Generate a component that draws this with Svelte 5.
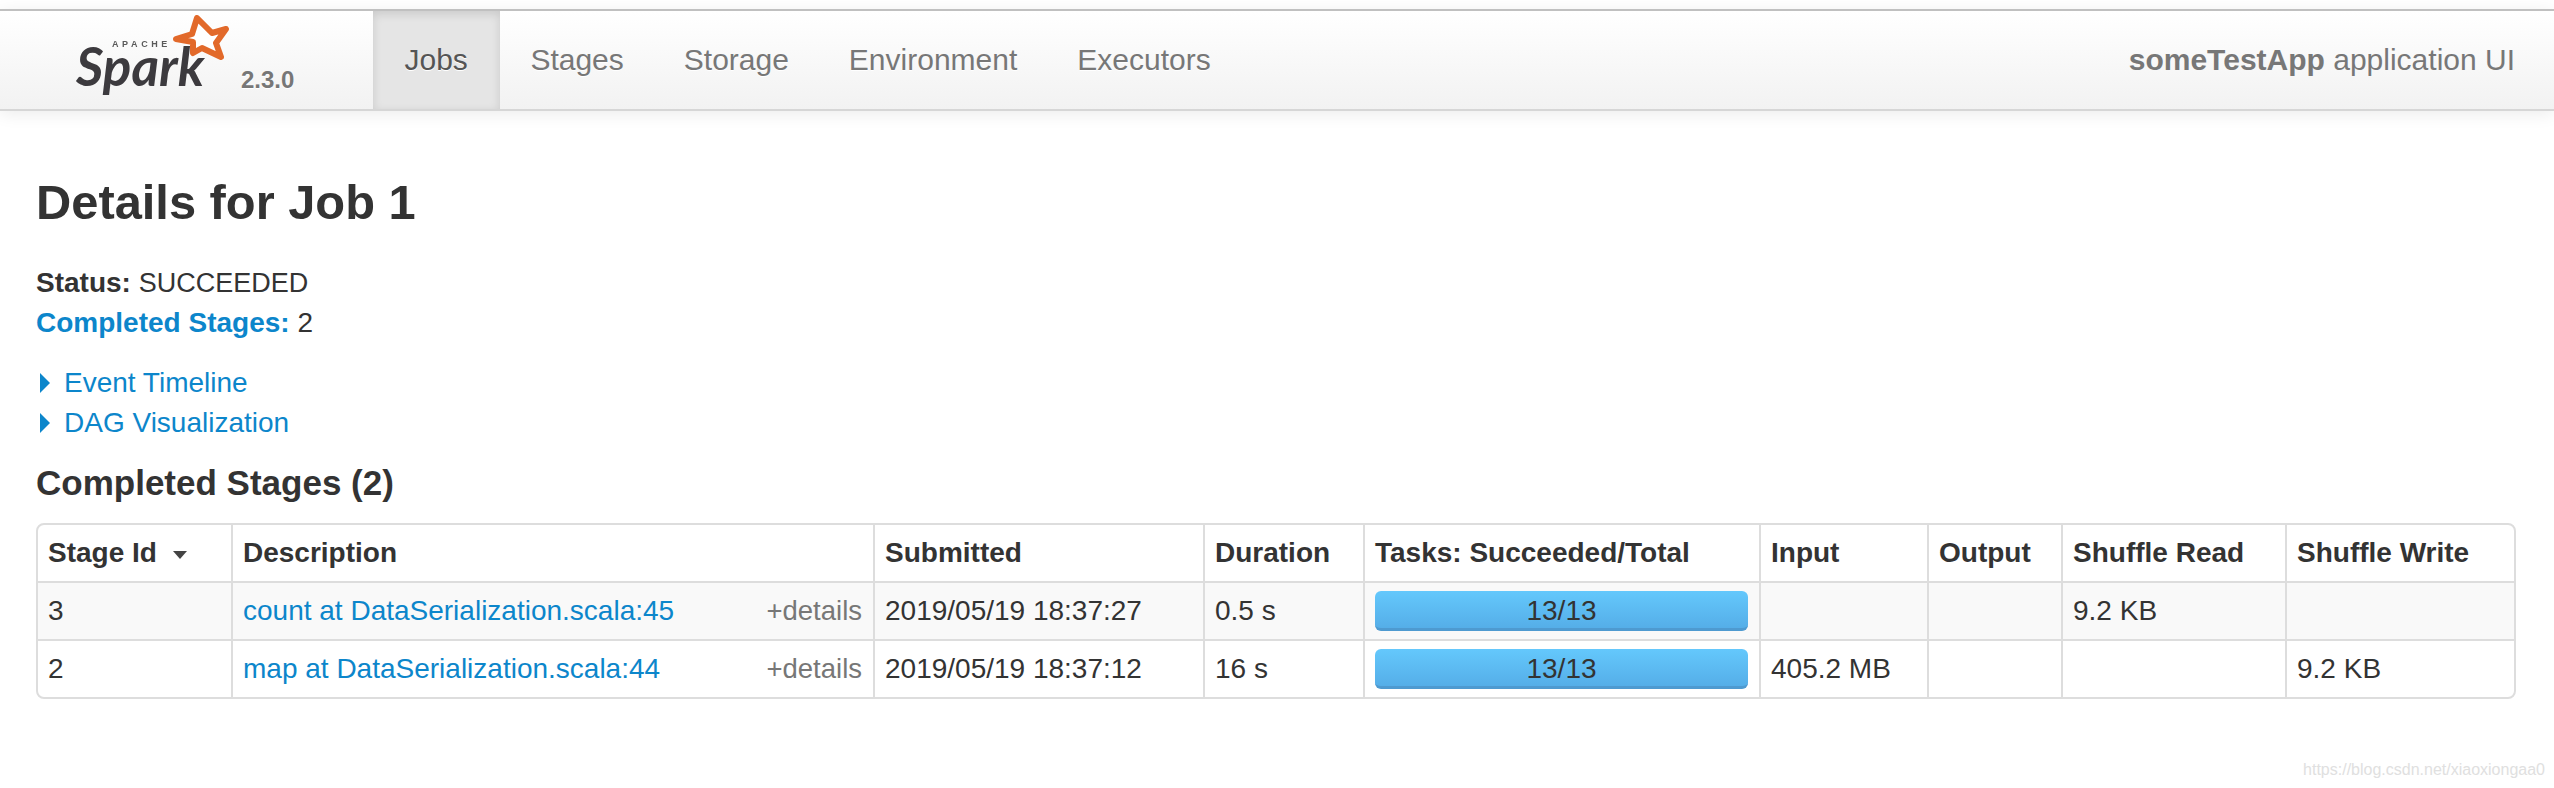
<script>
	const tabs = ['Jobs', 'Stages', 'Storage', 'Environment', 'Executors'];

	const columns = [
		{ label: 'Stage Id', width: 193, sorted: true },
		{ label: 'Description', width: 642 },
		{ label: 'Submitted', width: 330 },
		{ label: 'Duration', width: 160 },
		{ label: 'Tasks: Succeeded/Total', width: 396 },
		{ label: 'Input', width: 168 },
		{ label: 'Output', width: 134 },
		{ label: 'Shuffle Read', width: 224 },
		{ label: 'Shuffle Write', width: 229 }
	];

	const stages = [
		{ id: 3, desc: 'count at DataSerialization.scala:45', submitted: '2019/05/19 18:37:27', duration: '0.5 s', tasks: '13/13', input: '', output: '', read: '9.2 KB', write: '' },
		{ id: 2, desc: 'map at DataSerialization.scala:44', submitted: '2019/05/19 18:37:12', duration: '16 s', tasks: '13/13', input: '405.2 MB', output: '', read: '', write: '9.2 KB' }
	];
</script>

<div class="page">
	<header class="navbar">
		<div class="brand">
			<div class="logo">
				<svg class="star" width="70" height="60" viewBox="0 0 70 60">
					<polygon points="27,7 42,22 56,18 46,32 51,46 32,37 23,42 23,31 6,28 22,23" />
				</svg>
				<span class="apache">APACHE</span>
				<span class="spark">Spark</span>
			</div>
			<span class="version">2.3.0</span>
		</div>
		<nav class="tabs">
			{#each tabs as tab, i}
				<span class="tab" class:active={i === 0}>{tab}</span>
			{/each}
		</nav>
		<p class="app-name"><strong>someTestApp</strong> application UI</p>
	</header>

	<main class="content">
		<h3>Details for Job 1</h3>

		<ul class="summary">
			<li><strong>Status:</strong> <span class="status">SUCCEEDED</span></li>
			<li><strong class="link">Completed Stages:</strong> 2</li>
		</ul>

		<div class="toggles">
			<div class="toggle"><span class="arrow"></span>Event Timeline</div>
			<div class="toggle"><span class="arrow"></span>DAG Visualization</div>
		</div>

		<h4>Completed Stages (2)</h4>

		<table>
			<colgroup>
				{#each columns as col}
					<col style="width: {col.width}px" />
				{/each}
			</colgroup>
			<thead>
				<tr>
					{#each columns as col}
						<th>{col.label}{#if col.sorted}<span class="sort"></span>{/if}</th>
					{/each}
				</tr>
			</thead>
			<tbody>
				{#each stages as s}
					<tr>
						<td>{s.id}</td>
						<td>
							<div class="desc">
								<span class="link">{s.desc}</span>
								<span class="more">+details</span>
							</div>
						</td>
						<td>{s.submitted}</td>
						<td>{s.duration}</td>
						<td class="bar-cell"><div class="bar">{s.tasks}</div></td>
						<td>{s.input}</td>
						<td>{s.output}</td>
						<td>{s.read}</td>
						<td>{s.write}</td>
					</tr>
				{/each}
			</tbody>
		</table>
	</main>

	<span class="watermark">https://blog.csdn.net/xiaoxiongaa0</span>
</div>

<style>
	:global(body) {
		margin: 0;
		background: #fff;
	}

	.page {
		position: relative;
		height: 788px;
		overflow: hidden;
		padding-top: 9px;
		box-sizing: border-box;
		font-family: "Liberation Sans", Arial, sans-serif;
		font-size: 28px;
		color: #333;
	}

	.navbar {
		display: flex;
		align-items: stretch;
		height: 102px;
		box-sizing: border-box;
		border-top: 2px solid #c0c0c0;
		border-bottom: 2px solid #d6d6d6;
		background: linear-gradient(#fff, #f2f2f2);
		box-shadow: 0 3px 16px rgba(0, 0, 0, 0.08);
	}

	.brand {
		width: 373px;
		flex-shrink: 0;
		position: relative;
	}

	.logo {
		position: absolute;
		left: 70px;
		top: 0;
		width: 170px;
		height: 98px;
		filter: blur(0.5px);
	}

	.star {
		position: absolute;
		left: 100px;
		top: 0;
	}

	.star polygon {
		fill: #fff;
		stroke: #e2692a;
		stroke-width: 6;
		stroke-linejoin: round;
	}

	.apache {
		position: absolute;
		left: 42px;
		top: 28px;
		font-size: 9px;
		font-weight: 700;
		letter-spacing: 3.6px;
		color: #5a5a5a;
	}

	.spark {
		position: absolute;
		left: 6px;
		top: 24px;
		font-family: Lato, sans-serif;
		font-style: italic;
		font-weight: 700;
		font-size: 53px;
		line-height: 62px;
		color: #3c3a3e;
	}

	.version {
		position: absolute;
		left: 241px;
		top: 55px;
		font-size: 24px;
		font-weight: 700;
		color: #777;
		text-shadow: 0 1px 0 #fff;
	}

	.tabs {
		display: flex;
	}

	.tab {
		display: flex;
		align-items: center;
		padding: 0 30px;
		font-size: 30px;
		color: #777;
		text-shadow: 0 1px 0 #fff;
	}

	.tab.active {
		padding: 0 32.5px 0 31.5px;
		color: #555;
		background: #e5e5e5;
		box-shadow: inset 0 3px 10px rgba(0, 0, 0, 0.12);
	}

	.app-name {
		margin: 0 39px 0 auto;
		align-self: center;
		font-size: 30px;
		color: #777;
	}

	.content {
		padding: 63px 38px 0 36px;
	}

	h3 {
		margin: 0;
		font-size: 48.8px;
		line-height: 56px;
		color: #333;
	}

	.summary {
		list-style: none;
		margin: 33px 0 0;
		padding: 0;
		line-height: 40px;
	}

	.status {
		font-size: 27px;
	}

	.link {
		color: #0c86cb;
	}

	.toggles {
		margin-top: 20px;
		line-height: 40px;
		color: #0c86cb;
	}

	.toggle {
		display: flex;
		align-items: center;
	}

	.arrow {
		width: 0;
		height: 0;
		margin: 0 14px 0 4px;
		border-style: solid;
		border-width: 10px 0 10px 10px;
		border-color: transparent transparent transparent #0c86cb;
	}

	h4 {
		margin: 19px 0 0;
		font-size: 35px;
		line-height: 42px;
		color: #333;
	}

	table {
		box-sizing: border-box;
		width: 2480px;
		margin-top: 19px;
		table-layout: fixed;
		border-collapse: separate;
		border-spacing: 0;
		border: 2px solid #ddd;
		border-radius: 8px;
	}

	th,
	td {
		height: 56px;
		padding: 0 11px 0 10px;
		box-sizing: content-box;
		text-align: left;
		border-left: 2px solid #ddd;
		border-top: 2px solid #ddd;
		white-space: nowrap;
		line-height: 40px;
		font-size: 28px;
	}

	th:first-child,
	td:first-child {
		border-left: 0;
	}

	th {
		border-top: 0;
	}

	tbody tr:first-child td {
		background: #f9f9f9;
	}

	.sort {
		display: inline-block;
		margin-left: 16px;
		vertical-align: middle;
		border-style: solid;
		border-width: 8px 7.5px 0;
		border-color: #444 transparent transparent;
	}

	.desc {
		display: flex;
		justify-content: space-between;
	}

	.more {
		font-size: 27.5px;
		color: #777;
	}

	.bar {
		height: 37px;
		line-height: 39px;
		text-align: center;
		border-radius: 6px;
		border-bottom: 3px solid #4e9ad0;
		background: linear-gradient(#64c8fc, #55aee8);
		color: #333;
	}

	.watermark {
		position: absolute;
		right: 9px;
		bottom: 9px;
		font-size: 16px;
		color: #e0e0e0;
	}
</style>
